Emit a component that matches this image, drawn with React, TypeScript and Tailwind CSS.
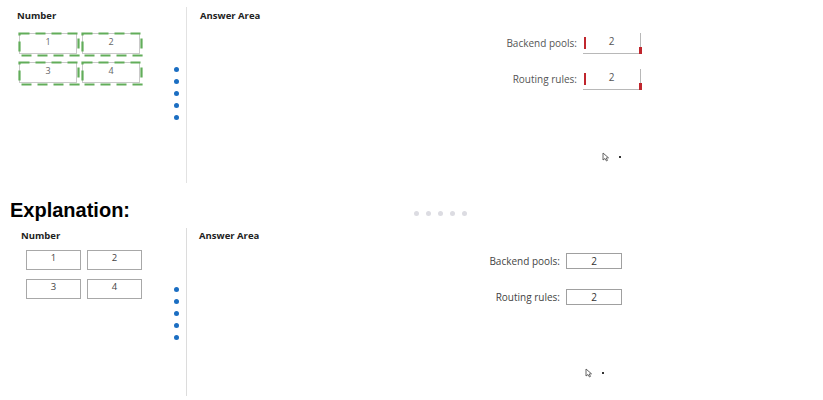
import React from 'react';

const ui = "font-['Open_Sans','Noto_Sans',sans-serif]";

const DashedBox: React.FC<{ n: string }> = ({ n }) => (
  <div className="relative w-[58px] h-[21px] border border-[#c9c9c9] bg-white">
    <svg className="absolute -left-[2px] -top-[2px]" width="62" height="25" viewBox="0 0 62 25">
      <rect x="1.5" y="1.5" width="59" height="22" fill="none" stroke="#62ad5a" strokeWidth="2.2" strokeDasharray="10 6" />
    </svg>
    <div className="text-center text-[9px] leading-[10px] pt-[3px] text-[#666]">{n}</div>
  </div>
);

const PlainBox: React.FC<{ n: string }> = ({ n }) => (
  <div className="w-[55px] h-[20px] border border-[#a8a8a8] bg-white text-center text-[9.5px] leading-[10px] pt-[2px] text-[#444]">
    {n}
  </div>
);

const BlueDots: React.FC = () => (
  <div className="flex flex-col gap-[7px]">
    {[0, 1, 2, 3, 4].map((i) => (
      <span key={i} className="block w-[5px] h-[5px] rounded-full bg-[#1b6ec2]" />
    ))}
  </div>
);

const Cursor: React.FC = () => (
  <div className="flex items-center gap-[10px]">
    <svg width="7" height="10" viewBox="0 0 7 10">
      <path d="M1 1 L1 8 L3 6.5 L4.5 9 L5.5 8.4 L4.2 6 L6.5 5.8 Z" fill="white" stroke="#555" strokeWidth="0.9" />
    </svg>
    <span className="block w-[2px] h-[2px] bg-[#333]" />
  </div>
);

const MarkedInput: React.FC<{ value: string }> = ({ value }) => (
  <div className="relative w-[58px] h-[21px] border-b border-r border-[#b8b8b8] bg-white">
    <span className="absolute left-[1px] top-[4px] w-[2px] h-[12px] bg-[#c0262d]" />
    <span className="absolute -right-[2px] bottom-[-1px] w-[3px] h-[7px] bg-[#c0262d]" />
    <div className="text-center text-[10px] leading-[12px] pt-[2px] text-[#555]">{value}</div>
  </div>
);

export default function App() {
  return (
    <div className={`w-[823px] h-[400px] bg-white overflow-hidden ${ui}`}>
      {/* top capture */}
      <div className="flex h-[190px] pt-[7px]">
        <div className="w-[187px] h-[176px] border-r border-[#e2e2e2] flex">
          <div className="pl-[17px] pt-[4px] w-[160px]">
            <div className="text-[9.5px] leading-[10px] font-bold text-[#222]">Number</div>
            <div className="mt-[12px] grid grid-cols-[58px_58px] gap-x-[5px] gap-y-[8px] pl-[2px]">
              <DashedBox n="1" />
              <DashedBox n="2" />
              <DashedBox n="3" />
              <DashedBox n="4" />
            </div>
          </div>
          <div className="pt-[60px] pl-[14px]">
            <BlueDots />
          </div>
        </div>
        <div className="pl-[13px] pt-[4px] flex-1">
          <div className="text-[9.5px] leading-[10px] font-bold text-[#222]">Answer Area</div>
          <div className="mt-[12px] flex flex-col gap-[15px]">
            <div className="flex items-center">
              <span className="w-[377px] text-right text-[10px] text-[#555]">Backend pools:</span>
              <span className="ml-[6px]"><MarkedInput value="2" /></span>
            </div>
            <div className="flex items-center">
              <span className="w-[377px] text-right text-[10px] text-[#555]">Routing rules:</span>
              <span className="ml-[6px]"><MarkedInput value="2" /></span>
            </div>
          </div>
          <div className="mt-[62px] ml-[402px]">
            <Cursor />
          </div>
        </div>
      </div>

      {/* explanation heading */}
      <div className="flex items-center h-[36px] mt-[2px]">
        <div className="pl-[10px] w-[414px] font-['Liberation_Sans',Arial,sans-serif] font-bold text-[20px] leading-[24px] text-black">
          Explanation:
        </div>
        <div className="flex gap-[7px] pt-[7px]">
          {[0, 1, 2, 3, 4].map((i) => (
            <span key={i} className="block w-[5px] h-[5px] rounded-full bg-[#dcdce2]" />
          ))}
        </div>
      </div>

      {/* bottom capture */}
      <div className="flex h-[172px]">
        <div className="w-[187px] h-[168px] border-r border-[#dcdcdc] flex">
          <div className="pl-[21px] pt-[3px] w-[167px]">
            <div className="text-[9.5px] leading-[10px] font-bold text-[#222]">Number</div>
            <div className="mt-[9px] grid grid-cols-[55px_55px] gap-x-[6px] gap-y-[9px] pl-[5px]">
              <PlainBox n="1" />
              <PlainBox n="2" />
              <PlainBox n="3" />
              <PlainBox n="4" />
            </div>
          </div>
          <div className="pt-[59px] pl-[7px]">
            <BlueDots />
          </div>
        </div>
        <div className="pl-[12px] pt-[3px] flex-1">
          <div className="text-[9.5px] leading-[10px] font-bold text-[#222]">Answer Area</div>
          <div className="mt-[12px] flex flex-col gap-[20px]">
            <div className="flex items-center">
              <span className="w-[361px] text-right text-[10px] text-[#444]">Backend pools:</span>
              <div className="ml-[6px] w-[56px] h-[16px] border border-[#a0a0a0] text-center text-[10px] leading-[14px] text-[#333]">2</div>
            </div>
            <div className="flex items-center">
              <span className="w-[361px] text-right text-[10px] text-[#444]">Routing rules:</span>
              <div className="ml-[6px] w-[56px] h-[16px] border border-[#a0a0a0] text-center text-[10px] leading-[14px] text-[#333]">2</div>
            </div>
          </div>
          <div className="mt-[63px] ml-[386px]">
            <Cursor />
          </div>
        </div>
      </div>
    </div>
  );
}
